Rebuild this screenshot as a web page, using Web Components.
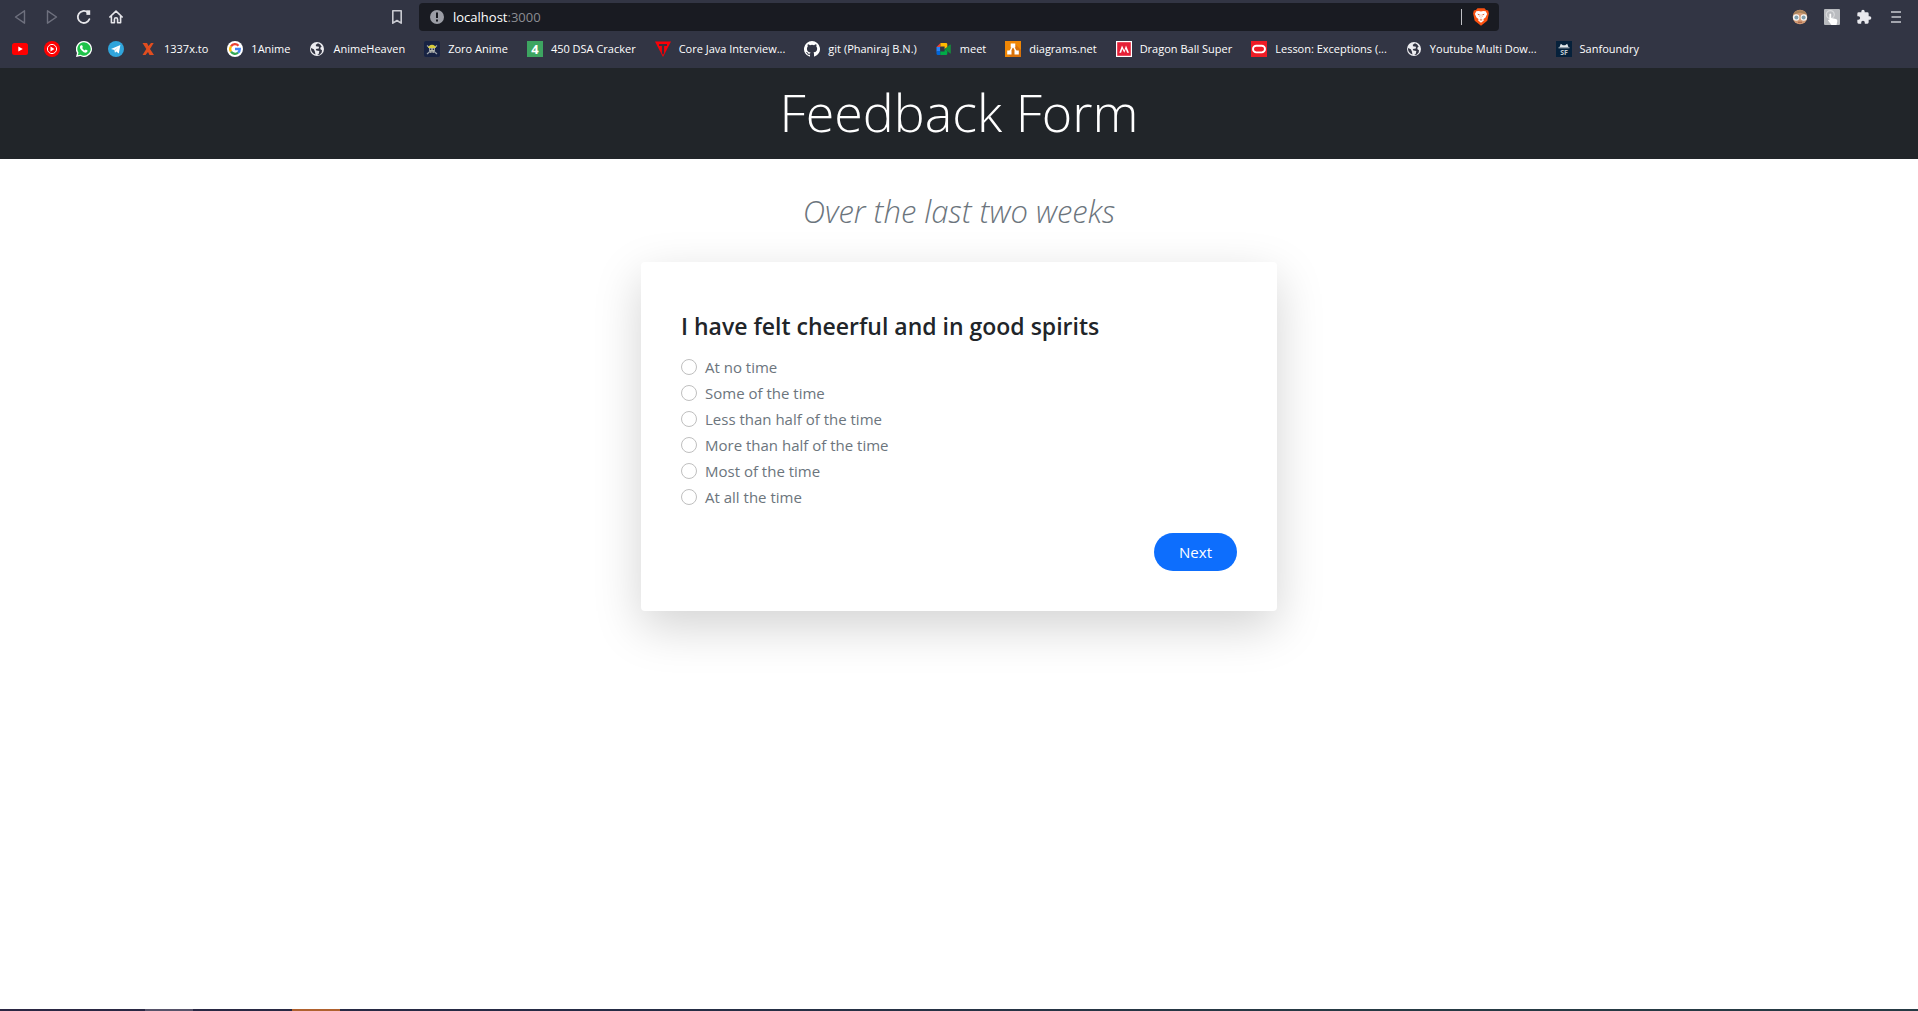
<!DOCTYPE html>
<html lang="en">
<head>
<meta charset="utf-8">
<title>Feedback Form</title>
<style>
html,body{margin:0}
body{font-family:"Open Sans","Noto Sans",sans-serif;background:#fff;color:#212529}
</style>
</head>
<body>
<app-window></app-window>

<script>
const icons = {
  back: '<svg viewBox="0 0 16 16"><path d="M12.500 1.800 3.500 8l9 6.200z" fill="none" stroke="#6e707e" stroke-width="1.400" stroke-linejoin="round"/></svg>',
  forward: '<svg viewBox="0 0 16 16"><path d="M3.500 1.800 12.500 8l-9 6.200z" fill="none" stroke="#6e707e" stroke-width="1.400" stroke-linejoin="round"/></svg>',
  reload: '<svg viewBox="0 0 16 16"><path d="M13.400 10.200A6 6 0 1 1 11.600 3.300" fill="none" stroke="#e6e6ea" stroke-width="1.800" stroke-linecap="round"/><path d="M10.400 1.300h3.800v4.600h-3.800z" fill="#e6e6ea"/></svg>',
  home: '<svg viewBox="0 0 16 16"><path d="M1.800 8 8 2.200 14.200 8M3.400 7.200v6.500h3v-3.300a1.600 1.600 0 0 1 3.200 0v3.300h3V7.200" fill="none" stroke="#e6e6ea" stroke-width="1.600" stroke-linejoin="round" stroke-linecap="round"/></svg>',
  mark: '<svg viewBox="0 0 16 16"><path d="M3.800 1.800h8.400v12.400L8 11.500l-4.200 2.700z" fill="none" stroke="#c9cad1" stroke-width="1.600" stroke-linejoin="round"/></svg>',
  info: '<svg viewBox="0 0 16 16"><circle cx="8" cy="8" r="7" fill="#9b9da5"/><path d="M7 3.600h2v5.400H7zM7 10.500h2v2H7z" fill="#17191f"/></svg>',
  brave: '<svg viewBox="0 0 16 18"><path d="M4.500.3h7l1.500 1.600 2.200.6.700 3-1.600 7.200L8 17.800 1.700 12.700.100 5.500l.7-3L3 1.900z" fill="#fb5110"/><path d="m3.300 3.300 2.500-.4L8 3.600l2.200-.7 2.500.4 1.400 2.700-1.600 3.600-2 1.400.3 1.600L8 14.800l-2.800-2.200.3-1.600-2-1.400L1.900 6z" fill="#fff"/><path d="m4.200 5.800 2.500.5-.8.900zM11.800 5.800l-2.500.5.800.9zM7.300 9.700h1.400L8 10.500zM6.300 12l1.700-.8 1.700.8-1.700.5z" fill="#e0420a"/><path d="M7.200 6.500 6.700 9M8.800 6.500l.5 2.500" stroke="#fb8a5c" stroke-width=".6"/></svg>',
  glasses: '<svg viewBox="0 0 16 16"><circle cx="8" cy="8" r="7.300" fill="#d29a74"/><path d="M1 6.500A7.300 7.300 0 0 1 15 6.500L13 5 8 3.800 3 5z" fill="#a7825b"/><circle cx="4.200" cy="8.500" r="3.200" fill="#f6f6f6"/><circle cx="11.800" cy="8.500" r="3.200" fill="#f6f6f6"/><circle cx="4.400" cy="8.500" r="2" fill="#7f9dab"/><circle cx="11.600" cy="8.500" r="2" fill="#7f9dab"/><path d="M6 12.700h4v1H6z" fill="#a05a40"/></svg>',
  touch: '<svg viewBox="0 0 16 16"><rect width="16" height="16" rx="1" fill="#b9bbbf"/><circle cx="6.300" cy="5.600" r="4" fill="none" stroke="#d8d9dc" stroke-width="1.200"/><path d="M5.400 5q.9-1 1.800 0v4l4.800 1q1.500.6 1.300 2L12.500 16h-5L4 11.600q.3-1.300 1.400-.4z" fill="#fff"/></svg>',
  puzzle: '<svg viewBox="0 0 24 24"><path d="M20.500 11H19V7a2 2 0 0 0-2-2h-4V3.500a2.500 2.500 0 0 0-5 0V5H4a2 2 0 0 0-2 2v3.800h1.500a2.700 2.700 0 0 1 0 5.400H2V20a2 2 0 0 0 2 2h3.800v-1.500a2.700 2.700 0 0 1 5.400 0V22H17a2 2 0 0 0 2-2v-4h1.500a2.500 2.500 0 0 0 0-5z" fill="#e9e9ee"/></svg>',
  menu: '<svg viewBox="0 0 16 16"><path d="M3 3h10M3.500 8h9.500M3 13h10" stroke="#c9cad1" stroke-width="1.600"/></svg>',
  youtube: '<svg viewBox="0 0 16 16"><rect y="2" width="16" height="12" rx="2.500" fill="#f00"/><path d="M6.300 5.400v5.200L10.800 8z" fill="#fff"/></svg>',
  ytmusic: '<svg viewBox="0 0 16 16"><circle cx="8" cy="8" r="8" fill="#f00"/><circle cx="8" cy="8" r="4.600" fill="none" stroke="#fff" stroke-width="1"/><path d="M6.500 5.600v4.800L10.500 8z" fill="#fff"/></svg>',
  whatsapp: '<svg viewBox="0 0 16 16"><path d="M8 0a8 8 0 1 1-3.700 15.100L0 16l1-4A8 8 0 0 1 8 0z" fill="#fff"/><path d="M8 1.300a6.700 6.700 0 1 1-3.500 12.400l-2.700.6.700-2.600A6.700 6.700 0 0 1 8 1.300z" fill="#1fc24a"/><path d="M5 4.200h1.100l.8 1.900-.7 1q.9 1.700 2.600 2.500l.9-1 1.900.9q.1 1.900-1.900 2.200-1.900 0-4-2.200T3.900 6q.1-1.300 1.100-1.800z" fill="#fff"/></svg>',
  telegram: '<svg viewBox="0 0 16 16"><circle cx="8" cy="8" r="8" fill="#30a5dc"/><path d="m3 7.900 9.400-3.800-1.600 8.300-2.500-1.900-1.300 1.300-.5-2.900z" fill="#fff"/><path d="m6.500 8.900 4-2.900-3.300 3.500-.2 2.300z" fill="#b9d9ea"/></svg>',
  x1337: '<svg viewBox="0 0 16 16"><path d="M2.500 2H7l1.500 3L11 2h2.700L10 8l4 6H9.500L8 11l-2.500 3H2.500l3.800-6z" fill="#e14d1f"/></svg>',
  google: '<svg viewBox="0 0 16 16"><circle cx="8" cy="8" r="8" fill="#fff"/><g fill="none" stroke-width="2.300"><path d="M4 5.300A4.800 4.800 0 0 1 11.500 4.700" stroke="#ea4335"/><path d="M4 10.600A4.800 4.800 0 0 1 4 5.300" stroke="#fbbc05"/><path d="M11.100 11.700A4.800 4.800 0 0 1 4 10.600" stroke="#34a853"/><path d="M8 8h4.800a4.800 4.800 0 0 1-1.700 3.700" stroke="#4285f4"/></g></svg>',
  globe: '<svg viewBox="0 0 16 16"><circle cx="8" cy="8" r="7" fill="#ececf0"/><path d="M9 2.300 6.800 3.700l.2 1.500 3 .5-.2 1.700-3 .6.500 1.500 3 .6-.5 2.700-1.600 1.300 2.500-.3 2-2.300.3-2.200-1.500-1-.2-1.600 1.400-1A6 6 0 0 0 9 2.300zM2 6.900l2.800 1.300 1 2.100.7 3.200A6 6 0 0 1 2 6.900z" fill="#333543"/></svg>',
  zoro: '<svg viewBox="0 0 16 16"><rect width="16" height="16" rx="2" fill="#182343"/><path d="m3 4.500 10 8.500M13 4.500 3 13" stroke="#9da3aa" stroke-width="1.200"/><path d="M5 7h6v2.500l-1 1v1.500H6v-1.500l-1-1z" fill="#b7bab2"/><path d="M5 5q3-2.600 6 0l1 2H4z" fill="#d7cc3c"/><path d="M5.800 7.600h1.500v1.500H5.800zM8.700 7.600h1.500v1.500H8.700zM6.600 10.800h2.800v.8H6.600z" fill="#28304a"/></svg>',
  four: '<svg viewBox="0 0 16 16"><path d="M0 0h16v16H0z" fill="#3da561"/><text x="8" y="12.500" text-anchor="middle" font-family="Open Sans" font-weight="700" font-size="13" fill="#fff">4</text></svg>',
  tee: '<svg viewBox="0 0 16 16"><path d="M0 .5h16L8 16z" fill="#fb0007"/><path d="M4 3h8v2H9.100v7L8 14l-1.100-2V5H4z" fill="#39303c"/></svg>',
  github: '<svg viewBox="0 0 16 16"><path d="M8 0a8 8 0 0 0-2.530 15.590c.4.070.550-.170.550-.380v-1.490c-2.010.370-2.530-.490-2.690-.940-.090-.230-.480-.940-.820-1.130-.280-.150-.680-.520-.010-.530.630-.010 1.080.580 1.230.820.720 1.210 1.870.870 2.330.660.070-.520.280-.870.510-1.070-1.780-.200-3.640-.890-3.640-3.950 0-.870.310-1.590.820-2.150-.080-.200-.360-1.020.080-2.120 0 0 .670-.210 2.200.820a7.600 7.600 0 0 1 4 0c1.530-1.040 2.200-.820 2.200-.820.440 1.100.160 1.920.080 2.120.510.560.820 1.270.820 2.150 0 3.070-1.870 3.750-3.650 3.950.290.250.540.730.540 1.480v2.190c0 .210.150.460.550.380A8 8 0 0 0 8 0z" fill="#fff"/></svg>',
  meet: '<svg viewBox="0 0 16 16"><path d="M4.500 2v4H.5z" fill="#ea4335"/><path d="M.5 6h3.600v4.500H.5z" fill="#2684fc"/><path d="M.5 10.300h3.800V14H2q-1.500 0-1.500-1.500z" fill="#0066da"/><path d="M4.500 2H10q1.300 0 1.300 1.300v3.200L8.600 8V5.600H4.500z" fill="#ffba00"/><path d="M4.300 10.400h4.300V8l2.700 2v2.700Q11.300 14 10 14H4.300z" fill="#00ac47"/><path d="m8.600 8 5.200-4.300q1-.4 1 .5v7.700q0 .9-1 .4z" fill="#168c3c"/></svg>',
  diagrams: '<svg viewBox="0 0 16 16"><path d="M0 0h16v16H0z" fill="#f08705"/><path d="m10 3 6 6v7H5.500L3 13.200z" fill="#d8710a"/><path d="M8 4.500 4.500 11.500M8 4.500l3.500 7" stroke="#fff" stroke-width="1.500"/><path d="M5.700 2.500h4.600v4H5.700zM2.200 9.500h4.300v4H2.200zM9.500 9.500h4.300v4H9.500z" fill="#fff"/></svg>',
  manga: '<svg viewBox="0 0 16 16"><path d="M0 0h16v16H0z" fill="#fff"/><path d="M1.200 1.200h13.600v13.600H1.200z" fill="#e51f36"/><path d="M3.300 11.800 6 4.500l2.300 5L10 4.500l3 7.300h-1.900l-1.300-3.700-1.500 3.700-2-3.900-1.200 3.900z" fill="#fff"/></svg>',
  oracle: '<svg viewBox="0 0 16 16"><path d="M0 0h16v16H0z" fill="#ee1c25"/><rect x="2" y="4.800" width="12" height="6.600" rx="3.300" fill="none" stroke="#fff" stroke-width="1.900"/></svg>',
  sf: '<svg viewBox="0 0 16 16"><path d="M0 0h16v16H0z" fill="#06213b"/><path d="m3.500 6.300 1.300-3.500 2 1.500h2.400l2-1.500 1.300 3.500z" fill="#e2e8ec"/><path d="M2.500 6.800h11" stroke="#b3bec7"/><text x="8" y="13.600" text-anchor="middle" font-family="Open Sans" font-weight="700" font-size="7" fill="#c0c9d0">SF</text></svg>'
};

class UiIcon extends HTMLElement {
  connectedCallback() {
    const root = this.attachShadow({mode: 'open'});
    root.innerHTML = `<style>:host{display:block;flex:none;width:16px;height:16px}
      svg{display:block;width:100%;height:100%}</style>${icons[this.getAttribute('name')]}`;
  }
}
customElements.define('ui-icon', UiIcon);

class ToolButton extends HTMLElement {
  connectedCallback() {
    const root = this.attachShadow({mode: 'open'});
    root.innerHTML = `<style>:host{display:block}
      button{display:grid;place-items:center;width:32px;height:28px;padding:0;border:0;background:none}</style>
      <button aria-label="${this.getAttribute('label')}"><ui-icon name="${this.getAttribute('icon')}"></ui-icon></button>`;
  }
}
customElements.define('tool-button', ToolButton);

class BookmarkLink extends HTMLElement {
  connectedCallback() {
    const root = this.attachShadow({mode: 'open'});
    const text = this.textContent;
    root.innerHTML = `<style>:host{display:block}
      a{display:flex;align-items:center;gap:8px;padding:0 8px;height:24px;color:#fff;font-size:11px;line-height:16px;text-decoration:none;white-space:nowrap}
      .named{padding-right:11px}</style>
      <a href="#" ${text ? 'class="named"' : `aria-label="${this.getAttribute('label')}"`}><ui-icon name="${this.getAttribute('icon')}"></ui-icon>${text ? '<slot></slot>' : ''}</a>`;
  }
}
customElements.define('bookmark-link', BookmarkLink);

class BrowserBar extends HTMLElement {
  connectedCallback() {
    const root = this.attachShadow({mode: 'open'});
    root.innerHTML = `<style>
      :host{display:block;background:#323544}
      .row{display:flex;align-items:center;padding-top:3px}
      .side{display:flex;flex:1 1 0;box-sizing:border-box}
      .left{padding:0 6px 0 4px}
      .left tool-button:last-child{margin-left:auto}
      .right{justify-content:flex-end;padding:0 6px 0 4px}
      .address{display:flex;align-items:center;gap:8px;flex:0 1 1080px;box-sizing:border-box;height:28px;padding:0 10px;border-radius:4px;background:#191b22;font-size:13px;line-height:18px}
      .url{flex:1;color:#8c8d93}
      b{font-weight:400;color:#fff}
      .rule{width:1px;height:16px;background:#bfc0c5}
      .address ui-icon:last-child{height:18px;margin-left:3px}
      nav{display:flex;padding:6px 4px 7px}
    </style>
    <div class="row">
      <div class="side left">
        <tool-button icon="back" label="Back"></tool-button><tool-button icon="forward" label="Forward"></tool-button>
        <tool-button icon="reload" label="Reload"></tool-button><tool-button icon="home" label="Home"></tool-button>
        <tool-button icon="mark" label="Bookmark this page"></tool-button>
      </div>
      <div class="address"><ui-icon name="info"></ui-icon><div class="url"><b>localhost</b>:3000</div><div class="rule"></div><ui-icon name="brave"></ui-icon></div>
      <div class="side right">
        <tool-button icon="glasses" label="Profile extension"></tool-button><tool-button icon="touch" label="Touch extension"></tool-button>
        <tool-button icon="puzzle" label="Extensions"></tool-button><tool-button icon="menu" label="Menu"></tool-button>
      </div>
    </div>
    <nav>
      <bookmark-link icon="youtube" label="YouTube"></bookmark-link><bookmark-link icon="ytmusic" label="YouTube Music"></bookmark-link>
      <bookmark-link icon="whatsapp" label="WhatsApp"></bookmark-link><bookmark-link icon="telegram" label="Telegram"></bookmark-link>
      <bookmark-link icon="x1337">1337x.to</bookmark-link><bookmark-link icon="google">1Anime</bookmark-link>
      <bookmark-link icon="globe">AnimeHeaven</bookmark-link><bookmark-link icon="zoro">Zoro Anime</bookmark-link>
      <bookmark-link icon="four">450 DSA Cracker</bookmark-link><bookmark-link icon="tee">Core Java Interview...</bookmark-link>
      <bookmark-link icon="github">git (Phaniraj B.N.)</bookmark-link><bookmark-link icon="meet">meet</bookmark-link>
      <bookmark-link icon="diagrams">diagrams.net</bookmark-link><bookmark-link icon="manga">Dragon Ball Super</bookmark-link>
      <bookmark-link icon="oracle">Lesson: Exceptions (...</bookmark-link><bookmark-link icon="globe">Youtube Multi Dow...</bookmark-link>
      <bookmark-link icon="sf">Sanfoundry</bookmark-link>
    </nav>`;
  }
}
customElements.define('browser-bar', BrowserBar);

class PageHeader extends HTMLElement {
  connectedCallback() {
    const root = this.attachShadow({mode: 'open'});
    root.innerHTML = `<style>:host{display:block;background:#212529;color:#fff;text-align:center;padding:11px 0 14px}
      h1{margin:0;font-size:52px;line-height:66px;font-weight:300}</style><h1><slot></slot></h1>`;
  }
}
customElements.define('page-header', PageHeader);

class RadioOption extends HTMLElement {
  connectedCallback() {
    const root = this.attachShadow({mode: 'open'});
    root.innerHTML = `<style>:host{display:block}
      label{display:flex;align-items:center;gap:8px;height:26px;font-size:15px;line-height:24px;color:#6c757d}
      input{appearance:none;flex:none;width:16px;height:16px;margin:0;border:1px solid #bfbfbf;border-radius:50%;background:#fff}
      input:checked{border:5px solid #0d6efd}</style>
      <label><input type="radio" name="mood"><slot></slot></label>`;
  }
}
customElements.define('radio-option', RadioOption);

class QuestionCard extends HTMLElement {
  connectedCallback() {
    const root = this.attachShadow({mode: 'open'});
    root.innerHTML = `<style>:host{display:block;box-sizing:border-box;width:100%;max-width:636px;padding:48px 40px 40px;border-radius:4px;background:#fff;box-shadow:0 16px 48px rgba(0,0,0,.175)}
      h2{margin:0 0 12px;font-size:23px;line-height:32px;font-weight:600}
      .actions{display:flex;justify-content:flex-end;padding-top:23px}
      button{height:38px;padding:0 25px;border:0;border-radius:19px;background:#0d6efd;color:#fff;font:15px/24px "Open Sans",sans-serif}</style>
      <h2><slot name="question"></slot></h2><div role="radiogroup"><slot></slot></div>
      <div class="actions"><button type="button">Next</button></div>`;
  }
}
customElements.define('question-card', QuestionCard);

class TaskStrip extends HTMLElement {
  connectedCallback() {
    const root = this.attachShadow({mode: 'open'});
    root.innerHTML = `<style>:host{display:flex;height:2px;background:linear-gradient(90deg,#2b2743,#252b45 30%,#263a44 70%)}
      i{width:48px}.idle{margin-left:145px;background:#57536a}.active{margin-left:99px;background:#b0622f}</style>
      <i class="idle"></i><i class="active"></i>`;
  }
}
customElements.define('task-strip', TaskStrip);

class AppWindow extends HTMLElement {
  connectedCallback() {
    const root = this.attachShadow({mode: 'open'});
    root.innerHTML = `<style>:host{display:flex;flex-direction:column;min-height:100vh}
      main{flex:1;display:flex;flex-direction:column;align-items:center;padding:31px 16px}
      .lead{margin:0 0 30px;font-size:31px;line-height:42px;font-weight:300;font-style:italic;color:#6c757d}</style>
      <browser-bar></browser-bar>
      <page-header>Feedback Form</page-header>
      <main><p class="lead">Over the last two weeks</p>
      <question-card><span slot="question">I have felt cheerful and in good spirits</span>
        <radio-option>At no time</radio-option><radio-option>Some of the time</radio-option>
        <radio-option>Less than half of the time</radio-option><radio-option>More than half of the time</radio-option>
        <radio-option>Most of the time</radio-option><radio-option>At all the time</radio-option>
      </question-card></main>
      <task-strip></task-strip>`;
  }
}
customElements.define('app-window', AppWindow);
</script>
</body>
</html>
